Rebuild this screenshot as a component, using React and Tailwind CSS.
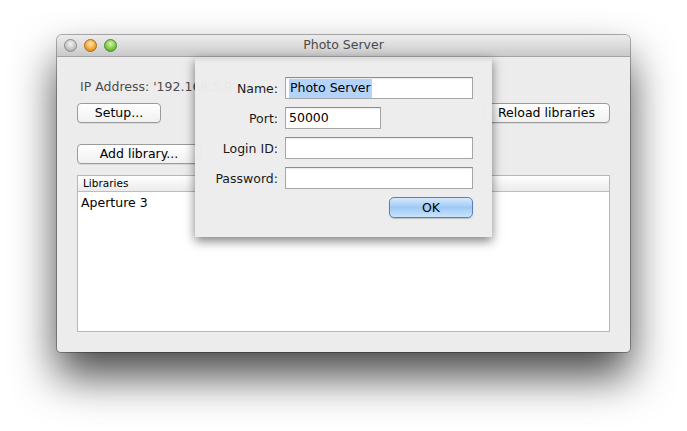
import React from 'react';

const font = { fontFamily: '"DejaVu Sans", "Liberation Sans", sans-serif' };

function Light({ kind }) {
  const styles = {
    gray: 'bg-[radial-gradient(circle_at_50%_35%,#f4f4f4_0%,#c8c8c8_55%,#9d9d9d_100%)] border-[#8a8a8a]',
    orange: 'bg-[radial-gradient(circle_at_50%_35%,#ffe6a8_0%,#f3a93a_55%,#c8781a_100%)] border-[#a8661e]',
    green: 'bg-[radial-gradient(circle_at_50%_35%,#d6f6a8_0%,#7fc94a_55%,#4a9a2a_100%)] border-[#4c8a2c]',
  };
  return <div className={`w-[13px] h-[13px] rounded-full border ${styles[kind]}`} />;
}

function Button({ children, className = '' }) {
  return (
    <div
      className={`h-[20px] rounded-[4px] border border-[#9b9b9b] bg-gradient-to-b from-white to-[#f1f1f1] shadow-[0_1px_0_rgba(0,0,0,0.08)] flex items-center justify-center text-[12.5px] text-black ${className}`}
    >
      {children}
    </div>
  );
}

function Field({ className = '', children }) {
  return (
    <div
      className={`h-[22px] border border-[#a6a6a6] border-t-[#8d8d8d] bg-white shadow-[inset_0_1px_1px_rgba(0,0,0,0.08)] flex items-center pl-[3px] pt-[1px] text-[12.5px] text-black ${className}`}
    >
      {children}
    </div>
  );
}

function Row({ label, children }) {
  return (
    <div className="flex items-center h-[22px]">
      <div className="w-[83px] text-right text-[12.5px] text-[#1a1a1a] pt-[2px]">{label}</div>
      <div className="ml-[7px]">{children}</div>
    </div>
  );
}

export default function App() {
  return (
    <div className="w-[687px] h-[431px] bg-white pt-[35px] pl-[57px] overflow-hidden" style={font}>
      {/* Window */}
      <div className="w-[573px] h-[317px] flex flex-col rounded-t-[5px] rounded-b-[4px] bg-[#ececec] shadow-[0_24px_44px_rgba(0,0,0,0.72),0_0_0_1px_rgba(0,0,0,0.3)]">
        {/* Title bar */}
        <div className="relative h-[22px] rounded-t-[5px] bg-gradient-to-b from-[#ececec] via-[#dcdcdc] to-[#c9c9c9] border-b border-[#a3a3a3] flex items-center pl-[7px] gap-[7px]">
          <Light kind="gray" />
          <Light kind="orange" />
          <Light kind="green" />
          <div className="absolute inset-0 flex items-center justify-center text-[12.5px] text-[#4a4a4a] pointer-events-none">
            Photo Server
          </div>
        </div>

        {/* Content */}
        <div className="relative flex-1 flex flex-col px-[20px] pb-[20px]">
          <div className="pl-[3px] pt-[21px] h-[46px] text-[12.5px] text-[#4d4d4d] leading-[18px]">
            IP Address: &apos;192.168.5.9&apos;
          </div>
          <div className="flex justify-between">
            <Button className="w-[84px]">Setup...</Button>
            <Button className="w-[127px]">Reload libraries</Button>
          </div>
          <div className="flex mt-[21px]">
            <Button className="w-[124px]">Add library...</Button>
          </div>

          {/* Libraries table */}
          <div className="mt-[11px] flex-1 flex flex-col border border-[#b7b7b7] bg-white">
            <div className="h-[16px] border-b border-[#bdbdbd] bg-gradient-to-b from-white to-[#ebebeb] pl-[5px] text-[10.5px] leading-[15px] text-black">
              Libraries
            </div>
            <div className="pl-[3px] pt-[2px] text-[12.5px] leading-[18px] text-black">Aperture 3</div>
          </div>

          {/* Sheet */}
          <div className="absolute left-[138px] top-0 w-[297px] h-[180px] bg-[#ececec]/[0.97] shadow-[0_4px_10px_rgba(0,0,0,0.5)] flex flex-col gap-[8px] pt-[20px] pr-[19px]">
            <div className="absolute inset-x-0 top-0 h-[6px] bg-gradient-to-b from-[rgba(0,0,0,0.08)] to-transparent" />
            <Row label="Name:">
              <Field className="w-[188px] border-[#7b9fd6] shadow-[0_0_0_3px_rgba(117,160,225,0.55)]">
                <span className="bg-[#b3d3fa] px-[1px]">Photo Server</span>
              </Field>
            </Row>
            <Row label="Port:">
              <Field className="w-[96px]">50000</Field>
            </Row>
            <Row label="Login ID:">
              <Field className="w-[188px]" />
            </Row>
            <Row label="Password:">
              <Field className="w-[188px]" />
            </Row>
            <div className="flex justify-end">
              <div className="w-[84px] h-[21px] rounded-[5px] border border-[#5d7fb5] bg-gradient-to-b from-[#d6eafd] via-[#9fcaf4] to-[#c8e4fe] shadow-[0_1px_1px_rgba(0,0,0,0.2)] flex items-center justify-center text-[12.5px] text-black pt-[1px]">
                OK
              </div>
            </div>
          </div>
        </div>
      </div>
    </div>
  );
}
